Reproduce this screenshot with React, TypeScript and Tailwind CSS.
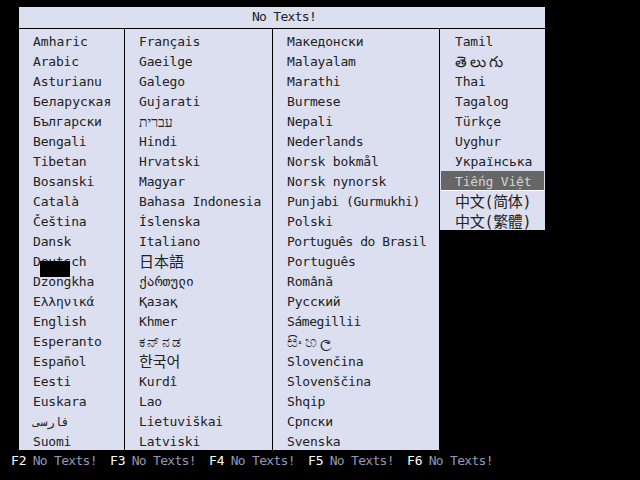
const custom: Record<string, string> = {
  "日本語": "text-[15px] tracking-normal",
  "한국어": "text-[15px] tracking-normal",
  "中文(简体)": "text-[15px] tracking-[-0.3px]",
  "中文(繁體)": "text-[15px] tracking-[-0.3px]",
  "ქართული": "tracking-normal",
  "ಕನ್\u200Cನಡ": "text-[14px] tracking-[2px]",
  "සිංහල": "text-[15px] tracking-[3px]",
  "తెలుగు": "text-[15px] tracking-[3px]",
  "فارسی": "text-[12px] tracking-normal",
  "עברית": "text-[14px] tracking-normal",
  "Amharic": "tracking-normal",
  "Беларуская": "tracking-normal",
  "Português do Brasil": "tracking-[-0.5px]",
  "Punjabi (Gurmukhi)": "tracking-[-0.45px]",
  "Sámegillii": "tracking-[-0.45px]",
  "Українська": "tracking-[-0.1px]",
};

const col1 = ["Amharic","Arabic","Asturianu","Беларуская","Български","Bengali","Tibetan","Bosanski","Català","Čeština","Dansk","Deutsch","Dzongkha","Ελληνικά","English","Esperanto","Español","Eesti","Euskara","فارسی","Suomi"];
const col2 = ["Français","Gaeilge","Galego","Gujarati","עברית","Hindi","Hrvatski","Magyar","Bahasa Indonesia","Íslenska","Italiano","日本語","ქართული","Қазақ","Khmer","ಕನ್\u200Cನಡ","한국어","Kurdî","Lao","Lietuviškai","Latviski"];
const col3 = ["Македонски","Malayalam","Marathi","Burmese","Nepali","Nederlands","Norsk bokmål","Norsk nynorsk","Punjabi (Gurmukhi)","Polski","Português do Brasil","Português","Română","Русский","Sámegillii","සිංහල","Slovenčina","Slovenščina","Shqip","Српски","Svenska"];
const col4 = ["Tamil","తెలుగు","Thai","Tagalog","Türkçe","Uyghur","Українська","Tiếng Việt","中文(简体)","中文(繁體)"];

const font = "font-['DejaVu_Sans_Mono','Noto_Sans_CJK_SC',monospace]";

function Item({ text, active }: { text: string; active?: boolean }) {
  if (active) {
    return (
      <div className="h-5 -ml-[14px] pl-[14px] mr-px bg-[#666666] text-[#d4d4d4] border-b border-white leading-[21px] whitespace-nowrap overflow-hidden">
        {text}
      </div>
    );
  }
  return <div className={`h-5 leading-[22px] whitespace-nowrap ${custom[text] ?? ""}`}>{text}</div>;
}

export default function App() {
  return (
    <div className={`w-[640px] h-[480px] bg-black overflow-hidden relative text-[13px] tracking-[-0.2px] text-[#222222] ${font}`}>
      <div className="pt-[7px] pl-[19px]">
        <div className="w-[526px] h-[22px] bg-[#dcdff0] border-b border-black flex items-center justify-center pb-px pl-[4px] tracking-[-0.7px]">No Texts!</div>
        <div className="flex items-start h-[421px]">
          <div className="w-[106px] h-[421px] overflow-hidden bg-[#dcdff0] border-r border-black pl-[14px] pt-[2px]">
            {col1.map((t) => <Item key={t} text={t} />)}
          </div>
          <div className="w-[148px] h-[421px] overflow-hidden bg-[#dcdff0] border-r border-black pl-[14px] pt-[2px]">
            {col2.map((t) => <Item key={t} text={t} />)}
          </div>
          <div className="w-[167px] h-[421px] overflow-hidden bg-[#dcdff0] border-r border-black pl-[14px] pt-[2px]">
            {col3.map((t) => <Item key={t} text={t} />)}
          </div>
          <div className="w-[105px] h-[201px] overflow-hidden bg-[#dcdff0] pl-[15px] pt-[2px]">
            {col4.map((t) => <Item key={t} text={t} active={t === "Tiếng Việt"} />)}
          </div>
        </div>
      </div>
      <div className="flex pl-[11px] pt-[1px] h-5 leading-5">
        {["F2","F3","F4","F5","F6"].map((k) => (
          <div key={k} className="w-[99px] flex gap-[6px] whitespace-nowrap">
            <span className="text-white tracking-normal">{k}</span>
            <span className="text-[#9498b8] tracking-[-0.7px]">No Texts!</span>
          </div>
        ))}
      </div>
      <div className="absolute left-[40px] top-[261px] w-[30px] h-[16px] bg-black" />
    </div>
  );
}
